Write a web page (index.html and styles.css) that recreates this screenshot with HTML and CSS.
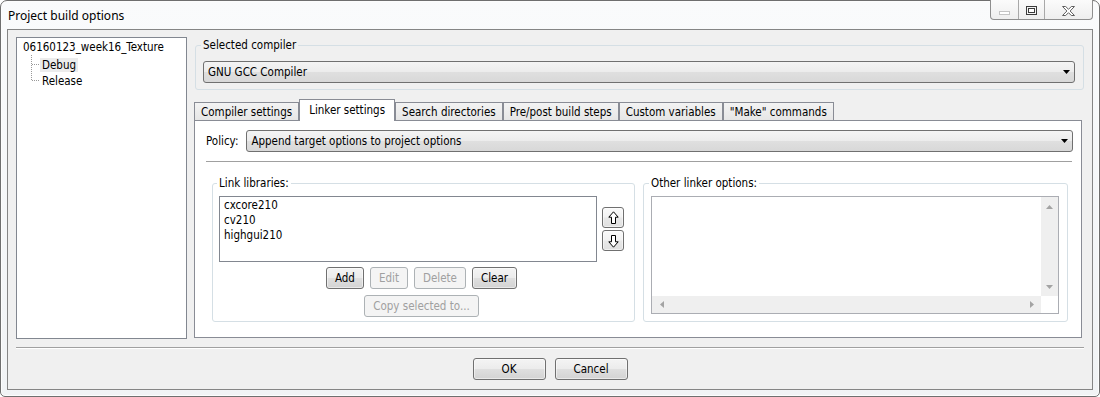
FILE: index.html
```html
<!DOCTYPE html>
<html lang="en">
<head>
    <meta charset="UTF-8">
    <title>Project build options</title>
    <link rel="stylesheet" href="styles.css">
</head>
<body>
    <div class="window">
        <div class="titlebar">
            <span class="title">Project build options</span>
            <div class="caption-buttons">
                <span class="cap cap-min">
                    <svg width="11" height="4" viewBox="0 0 11 4"><rect x="0.5" y="0.5" width="10" height="3" fill="#fff" stroke="#c4c4c4"/></svg>
                </span>
                <span class="cap cap-max">
                    <svg width="11" height="9" viewBox="0 0 11 9"><rect x="0.5" y="0.5" width="10" height="8" fill="#f4f4f4" stroke="#3b3b3b"/><rect x="2.5" y="2.5" width="6" height="4" fill="#fff" stroke="#3b3b3b"/></svg>
                </span>
                <span class="cap cap-close">
                    <svg width="13" height="10" viewBox="0 0 13 10"><path d="M0.5 0.5h3.2l2.8 2.8 2.8-2.8h3.2l-4.4 4.5 4.4 4.5h-3.2l-2.8-2.8-2.8 2.8h-3.2l4.4-4.5z" fill="#fff" stroke="#606060"/></svg>
                </span>
            </div>
        </div>

        <div class="client">
            <div class="main">
                <div class="tree">
                    <div class="tree-root">06160123_week16_Texture</div>
                    <ul class="tree-children">
                        <li class="tree-item"><span class="tree-label selected">Debug</span></li>
                        <li class="tree-item last"><span class="tree-label">Release</span></li>
                    </ul>
                </div>

                <div class="settings">
                    <fieldset class="group compiler-group">
                        <legend>Selected compiler</legend>
                        <div class="combo">
                            <span>GNU GCC Compiler</span>
                            <svg width="7" height="4" viewBox="0 0 7 4"><path d="M0 0h7L3.5 4z" fill="#000"/></svg>
                        </div>
                    </fieldset>

                    <div class="tabs">
                        <div class="tab">Compiler settings</div>
                        <div class="tab active">Linker settings</div>
                        <div class="tab">Search directories</div>
                        <div class="tab">Pre/post build steps</div>
                        <div class="tab">Custom variables</div>
                        <div class="tab">"Make" commands</div>
                    </div>

                    <div class="tab-panel">
                        <div class="policy-row">
                            <span>Policy:</span>
                            <div class="combo">
                                <span>Append target options to project options</span>
                                <svg width="7" height="4" viewBox="0 0 7 4"><path d="M0 0h7L3.5 4z" fill="#000"/></svg>
                            </div>
                        </div>
                        <div class="separator policy-sep"></div>

                        <div class="linker-groups">
                            <fieldset class="group libs-group">
                                <legend>Link libraries:</legend>
                                <div class="libs-row">
                                    <div class="listbox">
                                        <div>cxcore210</div>
                                        <div>cv210</div>
                                        <div>highgui210</div>
                                    </div>
                                    <div class="move-buttons">
                                        <button class="btn btn-icon">
                                            <svg width="11" height="14" viewBox="0 0 11 14"><path d="M5.5 0.8 10.2 6.2H7.5v6.3h-4V6.2H0.8z" fill="#fff" stroke="#000"/></svg>
                                        </button>
                                        <button class="btn btn-icon">
                                            <svg width="11" height="14" viewBox="0 0 11 14"><path d="M5.5 13.2 10.2 7.8H7.5V1.5h-4v6.3H0.8z" fill="#fff" stroke="#000"/></svg>
                                        </button>
                                    </div>
                                </div>
                                <div class="lib-actions">
                                    <button class="btn">Add</button>
                                    <button class="btn" disabled>Edit</button>
                                    <button class="btn" disabled>Delete</button>
                                    <button class="btn">Clear</button>
                                </div>
                                <div class="lib-actions copy-row">
                                    <button class="btn" disabled>Copy selected to...</button>
                                </div>
                            </fieldset>

                            <fieldset class="group other-group">
                                <legend>Other linker options:</legend>
                                <div class="textbox">
                                    <div class="textbox-area"></div>
                                    <div class="vscroll">
                                        <svg width="7" height="4" viewBox="0 0 7 4"><path d="M3.5 0 7 4H0z" fill="#a3a3a3"/></svg>
                                        <svg width="7" height="4" viewBox="0 0 7 4"><path d="M0 0h7L3.5 4z" fill="#a3a3a3"/></svg>
                                    </div>
                                    <div class="hscroll">
                                        <svg width="4" height="7" viewBox="0 0 4 7"><path d="M0 3.5 4 0v7z" fill="#a3a3a3"/></svg>
                                        <svg width="4" height="7" viewBox="0 0 4 7"><path d="M4 3.5 0 0v7z" fill="#a3a3a3"/></svg>
                                    </div>
                                    <div class="scroll-corner"></div>
                                </div>
                            </fieldset>
                        </div>
                    </div>
                </div>
            </div>

            <div class="separator bottom-sep"></div>

            <div class="dialog-buttons">
                <button class="btn btn-dialog">OK</button>
                <button class="btn btn-dialog">Cancel</button>
            </div>
        </div>
    </div>
</body>
</html>
```

FILE: styles.css
```css
* {
    box-sizing: border-box;
}

body {
    margin: 0;
    background: #fff;
    font-family: "DejaVu Sans Condensed", "DejaVu Sans", sans-serif;
    font-size: 11.5px;
    color: #000;
}

.window {
    width: 1100px;
    height: 397px;
    display: flex;
    flex-direction: column;
    padding: 0 6px 6px 6px;
    border: 1px solid #6f6f6f;
    border-radius: 7px 7px 5px 5px;
    background: linear-gradient(#fafbfc, #f1f3f5);
    box-shadow: inset 0 0 0 1px #fdfdfd;
}

/* title bar */

.titlebar {
    height: 28px;
    flex-shrink: 0;
    display: flex;
    justify-content: space-between;
}

.title {
    align-self: center;
    padding-left: 1px;
    font-family: "Noto Sans", "Open Sans", sans-serif;
    font-size: 12px;
}

.caption-buttons {
    display: flex;
    width: 103px;
    height: 20px;
    margin-top: -1px;
    border: 1px solid #8e8e8e;
    border-top: none;
    border-radius: 0 0 4px 4px;
    background: linear-gradient(#fbfbfb, #eeeeee);
}

.cap {
    display: flex;
    align-items: center;
    justify-content: center;
    padding-top: 2px;
}

.cap-min {
    width: 28px;
    border-right: 1px solid #a8a8a8;
}

.cap-min svg {
    margin-top: 5px;
}

.cap-max {
    width: 26px;
    border-right: 1px solid #a8a8a8;
}

.cap-close {
    flex: 1;
}

/* client area */

.client {
    flex: 1;
    display: flex;
    flex-direction: column;
    background: #f0f0f0;
    border: 1px solid #858585;
}

.main {
    display: flex;
    gap: 7px;
    padding: 7px 10px 0 8px;
}

.tree {
    width: 171px;
    height: 302px;
    flex-shrink: 0;
    padding: 1px 0 0 6px;
    background: #fff;
    border: 1px solid #828790;
    line-height: 16px;
}

.tree-children {
    list-style: none;
    margin: 1px 0 0 8px;
    padding: 0;
}

.tree-item {
    position: relative;
    height: 16px;
    padding-left: 9px;
}

.tree-item::before {
    content: "";
    position: absolute;
    left: 0;
    top: -1px;
    bottom: 0;
    border-left: 1px dotted #999;
}

.tree-item.last::before {
    bottom: 8px;
}

.tree-item::after {
    content: "";
    position: absolute;
    left: 1px;
    top: 8px;
    width: 7px;
    border-top: 1px dotted #999;
}

.tree-label {
    display: inline-block;
    padding: 0 2px;
    line-height: 14px;
    vertical-align: middle;
}

.tree-label.selected {
    background: #ececec;
}

.settings {
    flex: 1;
    min-width: 0;
    display: flex;
    flex-direction: column;
}

/* group boxes */

.group {
    min-width: 0;
    margin: 0;
    border: 1px solid #d5dfe5;
    border-radius: 3px;
}

.group legend {
    padding: 0 2px;
    margin-left: -2px;
    line-height: 13px;
}

.compiler-group {
    margin: 2px -2px 0 1px;
    padding: 9px 8px 6px 7px;
}

.combo {
    height: 22px;
    display: flex;
    align-items: center;
    justify-content: space-between;
    padding: 0 4px 0 4px;
    border: 1px solid #707070;
    border-radius: 3px;
    background: linear-gradient(#f4f4f4, #ececec 48%, #dfdfdf 52%, #d8d8d8);
}

/* tabs */

.tabs {
    display: flex;
    align-items: flex-end;
    height: 21px;
    margin-top: 9px;
}

.tab {
    height: 18px;
    display: flex;
    align-items: center;
    padding: 0 6px;
    border: 1px solid #898c95;
    border-bottom: none;
    background: linear-gradient(#f3f3f3, #e6e6e6);
    white-space: nowrap;
}

.tab.active {
    position: relative;
    z-index: 1;
    height: 22px;
    margin-bottom: -1px;
    padding: 0 9px 2px 9px;
    background: #fff;
}

.tab-panel {
    flex: 1;
    margin-bottom: 1px;
    background: #fff;
    border: 1px solid #898c95;
}

.policy-row {
    display: flex;
    align-items: center;
    gap: 8px;
    margin: 9px 8px 0 11px;
}

.policy-row .combo {
    flex: 1;
}

.separator {
    border-top: 1px solid #a0a0a0;
}

.policy-sep {
    margin: 9px 9px 0 11px;
}

.linker-groups {
    display: flex;
    gap: 8px;
    margin: 15px 13px 0 17px;
}

.libs-group {
    flex: 0 0 423px;
    padding: 6px 10px 3px 6px;
}

.other-group {
    flex: 1;
    padding: 6px 8px 7px 7px;
}

.libs-row {
    display: flex;
    align-items: center;
    gap: 5px;
}

.listbox {
    flex: 1;
    height: 66px;
    padding: 1px 4px;
    border: 1px solid #828790;
    line-height: 15px;
}

.move-buttons {
    display: flex;
    flex-direction: column;
    gap: 2px;
}

.lib-actions {
    display: flex;
    justify-content: center;
    gap: 6px;
    margin-top: 5px;
}

.copy-row {
    margin-top: 6px;
}

.textbox {
    height: 118px;
    display: grid;
    grid-template-columns: 1fr 17px;
    grid-template-rows: 1fr 17px;
    border: 1px solid #abadb3;
}

.vscroll {
    display: flex;
    flex-direction: column;
    justify-content: space-between;
    align-items: center;
    padding: 8px 0 7px 0;
    background: #efefef;
}

.hscroll {
    display: flex;
    justify-content: space-between;
    align-items: center;
    padding: 0 7px 0 8px;
    background: #efefef;
}

/* buttons */

.btn {
    height: 22px;
    padding: 0 8px;
    font: inherit;
    color: #000;
    border: 1px solid #707070;
    border-radius: 3px;
    background: linear-gradient(#f4f4f4, #ececec 48%, #dfdfdf 52%, #d3d3d3);
    box-shadow: inset 0 0 0 1px rgba(255, 255, 255, 0.5);
}

.btn:disabled {
    color: #a0a0a0;
    border-color: #adb2b5;
    background: #f4f4f4;
    box-shadow: none;
}

.btn-icon {
    width: 22px;
    height: 21px;
    padding: 0;
    display: flex;
    align-items: center;
    justify-content: center;
    background: linear-gradient(#fafafa, #f2f2f2 48%, #e8e8e8 52%, #e0e0e0);
}

.bottom-sep {
    margin: 8px 8px 0 8px;
    border-bottom: 1px solid #fff;
}

.dialog-buttons {
    display: flex;
    justify-content: center;
    gap: 9px;
    margin-top: 9px;
}

.btn-dialog {
    width: 73px;
}
```
